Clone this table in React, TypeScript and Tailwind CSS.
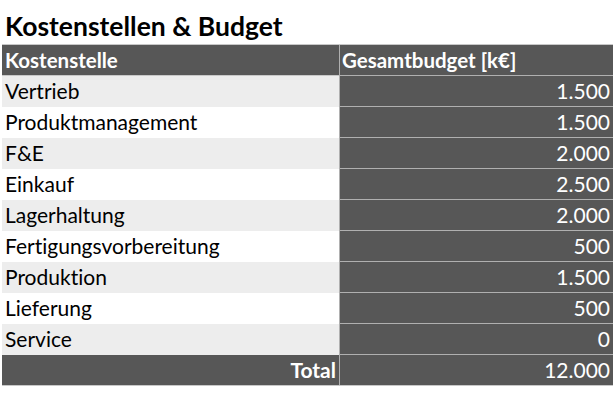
import React from "react";

const rows = [
  { name: "Vertrieb", value: "1.500" },
  { name: "Produktmanagement", value: "1.500" },
  { name: "F&E", value: "2.000" },
  { name: "Einkauf", value: "2.500" },
  { name: "Lagerhaltung", value: "2.000" },
  { name: "Fertigungsvorbereitung", value: "500" },
  { name: "Produktion", value: "1.500" },
  { name: "Lieferung", value: "500" },
  { name: "Service", value: "0" },
];

const App = () => {
  return (
    <div className="w-[614px] h-[400px] bg-white text-black font-['Lato',sans-serif] [font-variant-ligatures:none]">
      {/* Title */}
      <h1 className="h-[44px] pl-[5px] pt-[12px] text-[26.5px] leading-[28px] font-bold">
        Kostenstellen &amp; Budget
      </h1>

      {/* Table */}
      <div className="ml-[2px] w-[611px] border-t border-[#c8c8c8]">
        <div className="flex h-[31px] bg-[#575757] text-white font-bold text-[20.5px] leading-[26px]">
          <div className="w-[337px] pl-[3px] pt-[2px] border-b border-[#c8c8c8]">Kostenstelle</div>
          <div className="flex-1 pl-[2px] pt-[2px] border-l border-b border-[#b0b0b0]">Gesamtbudget [k€]</div>
        </div>

        {rows.map((r, i) => (
          <div key={r.name} className="flex h-[31px] text-[21px] leading-[28px]">
            <div
              className={
                i % 2 === 0
                  ? "w-[337px] pl-[3px] pt-[1px] bg-[#ededed]"
                  : "w-[337px] pl-[3px] pt-[1px] bg-white"
              }
            >
              {r.name}
            </div>
            <div className="flex-1 pr-[3px] pt-[1px] text-right text-white bg-[#575757] border-l border-b border-[#b0b0b0]">
              {r.value}
            </div>
          </div>
        ))}

        <div className="flex h-[31px] bg-[#575757] text-white text-[21px] leading-[28px] border-b border-[#c8c8c8]">
          <div className="w-[337px] pr-[3px] pt-[1px] text-right font-bold">Total</div>
          <div className="flex-1 pr-[3px] pt-[1px] text-right border-l border-[#b0b0b0]">12.000</div>
        </div>
      </div>
    </div>
  );
};

export default App;
